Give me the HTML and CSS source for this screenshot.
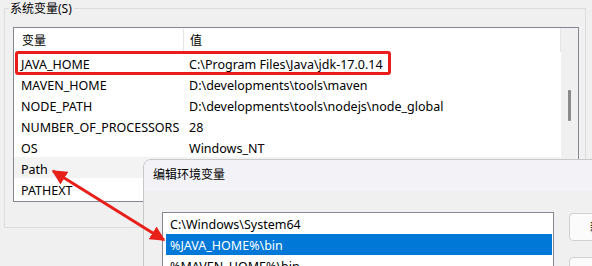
FILE: index.html
```html
<!DOCTYPE html>
<html lang="zh-CN">
<head>
  <meta charset="UTF-8" />
  <title>系统变量</title>
  <link rel="stylesheet" href="styles.css">
</head>
<body>

  <div class="group">
    <div class="group-title">系统变量(S)</div>

    <div class="listview">
      <div class="lv-main">
        <div class="lv-header">
          <div class="col-name">变量</div>
          <div class="col-value">值</div>
        </div>
        <div class="lv-row">
          <div class="col-name">JAVA_HOME</div>
          <div class="col-value">C:\Program Files\Java\jdk-17.0.14</div>
        </div>
        <div class="lv-row">
          <div class="col-name">MAVEN_HOME</div>
          <div class="col-value">D:\developments\tools\maven</div>
        </div>
        <div class="lv-row">
          <div class="col-name">NODE_PATH</div>
          <div class="col-value">D:\developments\tools\nodejs\node_global</div>
        </div>
        <div class="lv-row">
          <div class="col-name">NUMBER_OF_PROCESSORS</div>
          <div class="col-value">28</div>
        </div>
        <div class="lv-row">
          <div class="col-name">OS</div>
          <div class="col-value">Windows_NT</div>
        </div>
        <div class="lv-row hover">
          <div class="col-name">Path</div>
          <div class="col-value"></div>
        </div>
        <div class="lv-row">
          <div class="col-name">PATHEXT</div>
          <div class="col-value"></div>
        </div>
      </div>
      <div class="scrollbar"><div class="thumb"></div></div>
    </div>

    <div class="red-box"></div>
  </div>

  <div class="dialog">
    <div class="dialog-title">编辑环境变量</div>
    <div class="dialog-body">
      <div class="path-list">
        <div class="path-item">C:\Windows\System64</div>
        <div class="path-item selected">%JAVA_HOME%\bin</div>
        <div class="path-item">%MAVEN_HOME%\bin</div>
      </div>
      <div class="buttons">
        <button class="btn">新建(N)</button>
        <button class="btn">编辑(E)</button>
      </div>
    </div>
  </div>

  <svg class="arrows" width="592" height="266" viewBox="0 0 592 266">
    <defs>
      <marker id="head" viewBox="0 0 10 10" refX="9" refY="5" markerWidth="5" markerHeight="5" orient="auto-start-reverse">
        <path d="M0 0 L10 5 L0 10 z" fill="#e8201a" />
      </marker>
    </defs>
    <line x1="53" y1="171" x2="164" y2="240" stroke="#e8201a" stroke-width="3" marker-start="url(#head)" marker-end="url(#head)" />
  </svg>

</body>
</html>
```

FILE: styles.css
```css
body {
  margin: 0;
  width: 592px;
  height: 266px;
  overflow: hidden;
  background-color: #f0f0f0;
  font-family: "Noto Sans", "Noto Sans CJK SC", sans-serif;
  font-size: 12.5px;
  color: #000;
  position: relative;
}

.group {
  position: relative;
  margin: 8px 0 0 4px;
  width: 582px;
  height: 220px;
  border: 1px solid #dcdcdc;
  box-sizing: border-box;
}

.group-title {
  position: absolute;
  top: -9px;
  left: 4px;
  padding: 0 2px 0 1px;
  background-color: #f0f0f0;
  line-height: 17px;
  font-size: 12px;
}

.listview {
  margin: 18px 0 0 8px;
  width: 566px;
  height: 175px;
  border: 1px solid #828790;
  box-sizing: border-box;
  background-color: #fff;
  display: flex;
}

.lv-main {
  flex: 1;
}

.lv-header {
  display: flex;
  height: 24px;
  line-height: 24px;
  padding-top: 1px;
  box-sizing: border-box;
  border-right: 1px solid #e5e5e5;
}

.lv-header .col-name {
  width: 161px;
  padding-left: 8px;
  border-right: 1px solid #e5e5e5;
  font-size: 12px;
}

.lv-header .col-value {
  padding-left: 6px;
  font-size: 12px;
}

.lv-row {
  display: flex;
  height: 21px;
  line-height: 21px;
  padding-top: 2px;
  box-sizing: border-box;
}

.lv-row .col-name {
  width: 162px;
  padding-left: 7px;
}

.lv-row .col-value {
  padding-left: 6px;
}

.lv-row.hover {
  background-color: #f3f3f3;
}

.scrollbar {
  width: 17px;
  background-color: #f0f0f0;
  position: relative;
}

.thumb {
  position: absolute;
  left: 7px;
  top: 62px;
  width: 3px;
  height: 31px;
  background-color: #8a8a8a;
  border-radius: 1px;
}

.red-box {
  position: absolute;
  left: 10px;
  top: 42px;
  width: 376px;
  height: 24px;
  border: 3px solid #ea1c1c;
  border-radius: 3px;
  box-sizing: border-box;
}

.dialog {
  position: absolute;
  left: 143px;
  top: 159px;
  width: 480px;
  height: 120px;
  border: 1px solid #c8c8c8;
  border-radius: 8px 0 0 0;
  background-color: #f0f0f0;
  overflow: hidden;
}

.dialog-title {
  height: 31px;
  line-height: 29px;
  padding-left: 9px;
  background-color: #f3f2f7;
  font-size: 12px;
}

.dialog-body {
  display: flex;
  padding: 21px 0 0 18px;
  gap: 15px;
}

.path-list {
  flex-shrink: 0;
  width: 392px;
  height: 80px;
  border: 1px solid #828790;
  box-sizing: border-box;
  background-color: #fff;
  padding: 0 1px 0 3px;
}

.path-item {
  height: 21px;
  line-height: 21px;
  padding: 1px 0 0 4px;
  box-sizing: border-box;
}

.path-item.selected {
  background-color: #0078d7;
  color: #fff;
}

.buttons {
  flex-shrink: 0;
  display: flex;
  flex-direction: column;
  gap: 16px;
  padding-top: 1px;
}

.btn {
  width: 80px;
  height: 28px;
  border: 1px solid #d0d0d0;
  border-radius: 4px;
  background-color: #fbfbfb;
  font-family: inherit;
  font-size: 12px;
  text-align: left;
  padding-left: 20px;
}

.arrows {
  position: absolute;
  left: 0;
  top: 0;
}
```
